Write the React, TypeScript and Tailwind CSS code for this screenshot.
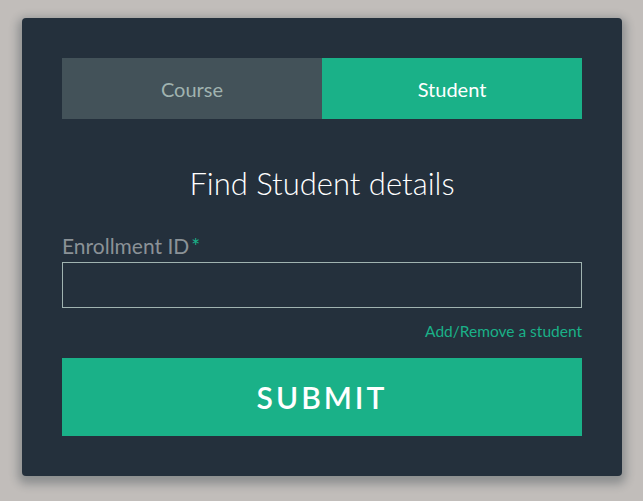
import React, { useState } from 'react';

const App: React.FC = () => {
  const [tab, setTab] = useState<'course' | 'student'>('student');
  const [enrollmentId, setEnrollmentId] = useState('');

  return (
    <div className="min-h-screen bg-[#c1bdba] pt-[18px] pl-[22px] font-['Lato',sans-serif]">
      <div className="w-[600px] rounded bg-[#24303c] p-10 shadow-[0_4px_10px_4px_rgba(19,35,47,0.3)]">
        <div className="grid h-[61px] grid-cols-2 text-[20px]">
          <button
            onClick={() => setTab('course')}
            className={
              tab === 'course'
                ? 'bg-[#1ab188] text-white'
                : 'bg-[#435259] text-[#a0b3b0]'
            }
          >
            Course
          </button>
          <button
            onClick={() => setTab('student')}
            className={
              tab === 'student'
                ? 'bg-[#1ab188] text-white'
                : 'bg-[#435259] text-[#a0b3b0]'
            }
          >
            Student
          </button>
        </div>

        <h1 className="mt-[40px] text-center text-[31px] font-light leading-[48px] text-white">
          Find Student details
        </h1>

        <label className="mt-[22px] block text-[21px] leading-[33px] text-[#8b9297]">
          Enrollment ID<span className="ml-[2px] text-[#1ab188]">*</span>
        </label>
        <input
          value={enrollmentId}
          onChange={(e) => setEnrollmentId(e.target.value)}
          className="block h-[46px] w-full border border-[#a0b3b0] bg-transparent px-[10px] text-[20px] text-white outline-none"
        />

        <div className="mt-[12px] text-right text-[15.5px] leading-[22px]">
          <a href="#" className="text-[#1ab188]">
            Add/Remove a student
          </a>
        </div>

        <button className="mt-[16px] h-[78px] w-full bg-[#1ab188] text-[30px] font-semibold uppercase tracking-[0.1em] text-white">
          Submit
        </button>
      </div>
    </div>
  );
};

export default App;
